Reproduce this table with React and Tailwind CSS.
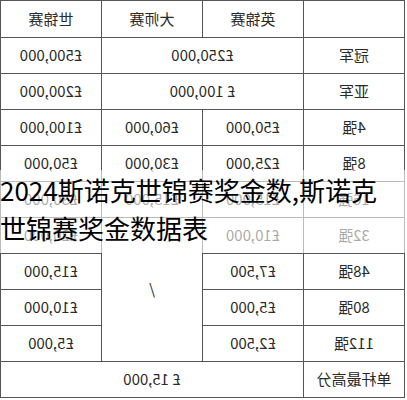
const rows = [
  { label: '', cells: [{ t: '英锦赛' }, { t: '大师赛' }, { t: '世锦赛' }] },
  { label: '冠军', cells: [{ t: '£250,000', span: 'col-span-2' }, { t: '£500,000' }] },
  { label: '亚军', cells: [{ t: '£ 100,000', span: 'col-span-2' }, { t: '£200,000' }] },
  { label: '4强', cells: [{ t: '£50,000' }, { t: '£60,000' }, { t: '£100,000' }] },
  { label: '8强', cells: [{ t: '£25,000' }, { t: '£30,000' }, { t: '£50,000' }] },
  { label: '16强', cells: [{ t: '£15,000' }, { t: '£15,000' }, { t: '£30,000' }] },
  { label: '32强', cells: [{ t: '£10,000' }, { t: '/', span: 'row-span-4' }, { t: '£20,000' }] },
  { label: '48强', cells: [{ t: '£7,500' }, { t: '£15,000' }] },
  { label: '80强', cells: [{ t: '£5,000' }, { t: '£10,000' }] },
  { label: '112强', cells: [{ t: '£2,500' }, { t: '£5,000' }] },
  { label: '单杆最高分', cells: [{ t: '£ 15,000', span: 'col-span-3' }] },
];

function Cell({ children, className = '' }) {
  return (
    <div className={`bg-white flex items-center justify-center text-[15px] text-[#2a2a2a] ${className}`}>
      {children}
    </div>
  );
}

export default function App() {
  return (
    <div className="relative w-[407px] h-[400px] overflow-hidden bg-white font-['Noto_Sans_CJK_SC','Noto_Sans',sans-serif]">
      {/* the source picture is mirrored left-right */}
      <div className="w-[405px] -scale-x-100 origin-center bg-[#555] p-px grid grid-cols-4 grid-rows-[36px_repeat(10,35px)] gap-px">
        {rows.map((r, i) => (
          <div key={i} className="contents">
            <Cell>{r.label}</Cell>
            {r.cells.map((c, j) => (
              <Cell key={j} className={c.span || ''}>
                {c.t}
              </Cell>
            ))}
          </div>
        ))}
      </div>

      <div className="absolute left-0 right-0 top-[170px] h-[83px] bg-white/60" />
      <div className="absolute left-0 top-[171px] text-[26px] leading-[38px] text-black whitespace-nowrap">
        <div>2024斯诺克世锦赛奖金数,斯诺克</div>
        <div>世锦赛奖金数据表</div>
      </div>
    </div>
  );
}
